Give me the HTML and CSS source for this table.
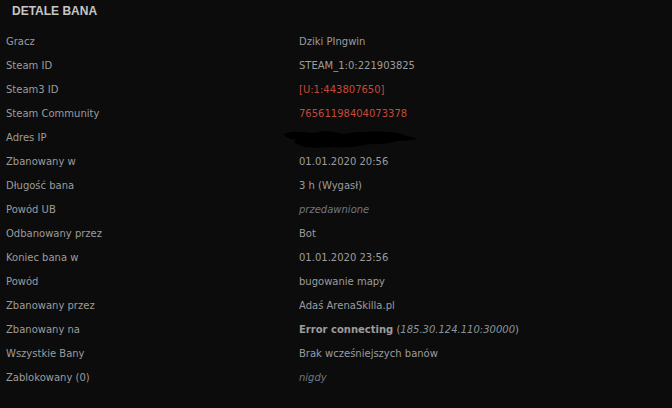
FILE: index.html
```html
<!DOCTYPE html>
<html lang="pl">
<head>
<meta charset="utf-8">
<link rel="stylesheet" href="styles.css">
</head>
<body>
<div class="panel">
  <h2 class="title">DETALE BANA</h2>
  <div class="rows">
    <div class="row"><div class="label">Gracz</div><div class="value">Dziki PIngwin</div></div>
    <div class="row"><div class="label">Steam ID</div><div class="value">STEAM_1:0:221903825</div></div>
    <div class="row"><div class="label">Steam3 ID</div><div class="value red">[U:1:443807650]</div></div>
    <div class="row"><div class="label">Steam Community</div><div class="value red">76561198404073378</div></div>
    <div class="row"><div class="label">Adres IP</div><div class="value"><svg class="scribble" width="136" height="20" viewBox="0 0 136 20"><path d="M2 5 C8 2 20 3 32 4 C40 1 52 2 60 5 C72 3 88 2 104 3 C112 3 118 4 124 7 C130 8 134 9 134 10 C128 11 124 12 116 12 C108 14 98 16 86 15 C76 18 62 19 48 18 C38 19 24 19 20 17 C14 15 10 13 14 11 C8 10 2 8 2 5 Z" fill="#000"/></svg></div></div>
    <div class="row"><div class="label">Zbanowany w</div><div class="value">01.01.2020 20:56</div></div>
    <div class="row"><div class="label">Długość bana</div><div class="value">3 h (Wygasł)</div></div>
    <div class="row"><div class="label">Powód UB</div><div class="value muted">przedawnione</div></div>
    <div class="row"><div class="label">Odbanowany przez</div><div class="value">Bot</div></div>
    <div class="row"><div class="label">Koniec bana w</div><div class="value">01.01.2020 23:56</div></div>
    <div class="row"><div class="label">Powód</div><div class="value">bugowanie mapy</div></div>
    <div class="row"><div class="label">Zbanowany przez</div><div class="value">Adaś ArenaSkilla.pl</div></div>
    <div class="row"><div class="label">Zbanowany na</div><div class="value"><b>Error connecting</b> (<i>185.30.124.110:30000</i>)</div></div>
    <div class="row"><div class="label">Wszystkie Bany</div><div class="value">Brak wcześniejszych banów</div></div>
    <div class="row"><div class="label">Zablokowany (0)</div><div class="value muted">nigdy</div></div>
  </div>
</div>
</body>
</html>
```
FILE: styles.css
```css
html, body {
  margin: 0;
  padding: 0;
  background: #0c0c0c;
  width: 672px;
  height: 408px;
  overflow: hidden;
}
.panel {
  font-family: "DejaVu Sans", Verdana, sans-serif;
  font-size: 10px;
  color: #9c9c9c;
}
.title {
  margin: 0;
  padding: 4px 12px 0;
  height: 29px;
  box-sizing: border-box;
  font-family: "Liberation Sans", Arial, sans-serif;
  font-weight: bold;
  font-size: 12px;
  color: #c6c6c6;
}
.rows {
  display: flex;
  flex-direction: column;
}
.row {
  display: flex;
  align-items: center;
  height: 24px;
}
.label {
  width: 293px;
  padding-left: 6px;
}
.value {
  flex: 1;
  display: flex;
  align-items: center;
  white-space: pre;
}
.red { color: #c24a3c; }
.muted { color: #6d7880; font-style: italic; }
.value b { font-weight: bold; }
.value i { color: #8a949a; }
.scribble { margin-left: -17px; margin-top: 4px; }
```
